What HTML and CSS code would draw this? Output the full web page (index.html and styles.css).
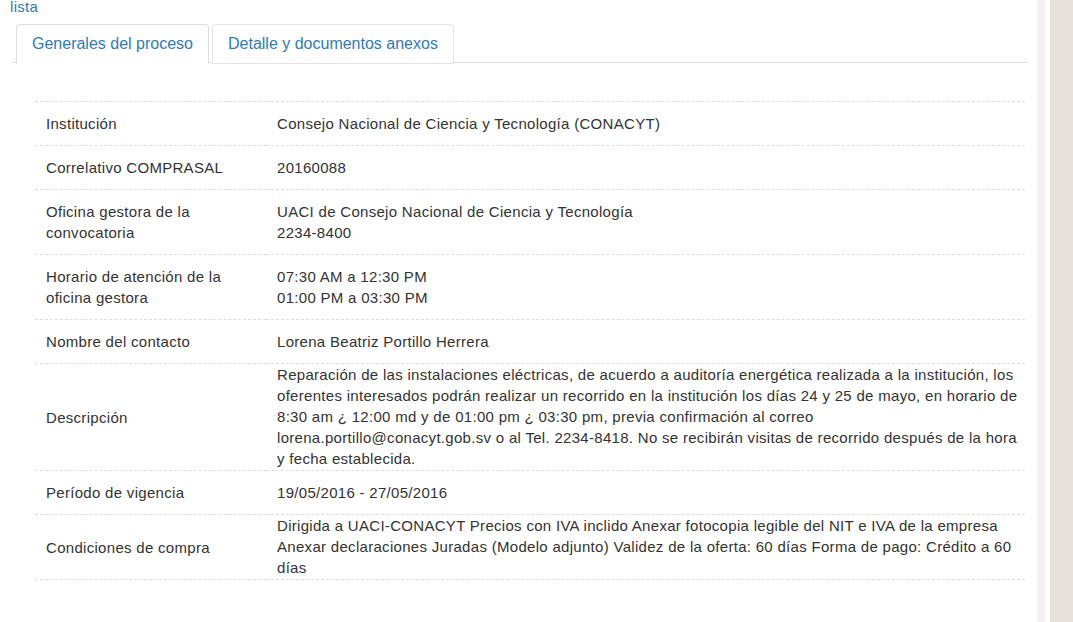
FILE: index.html
```
<!DOCTYPE html>
<html lang="es">
<head>
<meta charset="utf-8">
<title>Proceso</title>
<link rel="stylesheet" href="styles.css">
</head>
<body>
<div class="layout">
  <main class="main">
    <a class="back-link" href="#">lista</a>
    <ul class="tabs">
      <li class="tab active"><a href="#">Generales del proceso</a></li>
      <li class="tab"><a href="#">Detalle y documentos anexos</a></li>
    </ul>
    <table class="details">
      <tbody>
        <tr><td class="label">Institución</td><td class="value">Consejo Nacional de Ciencia y Tecnología (CONACYT)</td></tr>
        <tr><td class="label">Correlativo COMPRASAL</td><td class="value">20160088</td></tr>
        <tr><td class="label">Oficina gestora de la convocatoria</td><td class="value">UACI de Consejo Nacional de Ciencia y Tecnología<br>2234-8400</td></tr>
        <tr><td class="label">Horario de atención de la oficina gestora</td><td class="value">07:30 AM a 12:30 PM<br>01:00 PM a 03:30 PM</td></tr>
        <tr><td class="label">Nombre del contacto</td><td class="value">Lorena Beatriz Portillo Herrera</td></tr>
        <tr><td class="label">Descripción</td><td class="value">Reparación de las instalaciones eléctricas, de acuerdo a auditoría energética realizada a la institución, los oferentes interesados podrán realizar un recorrido en la institución los días 24 y 25 de mayo, en horario de 8:30 am ¿ 12:00 md y de 01:00 pm ¿ 03:30 pm, previa confirmación al correo lorena.portillo@conacyt.gob.sv o al Tel. 2234-8418. No se recibirán visitas de recorrido después de la hora y fecha establecida.</td></tr>
        <tr><td class="label">Período de vigencia</td><td class="value">19/05/2016 - 27/05/2016</td></tr>
        <tr><td class="label">Condiciones de compra</td><td class="value">Dirigida a UACI-CONACYT Precios con IVA inclido Anexar fotocopia legible del NIT e IVA de la empresa Anexar declaraciones Juradas (Modelo adjunto) Validez de la oferta: 60 días Forma de pago: Crédito a 60 días</td></tr>
      </tbody>
    </table>
  </main>
  <div class="gutter"></div>
  <div class="spacer"></div>
  <aside class="side"></aside>
</div>
</body>
</html>
```
FILE: styles.css
```
html, body {
  margin: 0;
  padding: 0;
  height: 100%;
}
body {
  font-family: "Liberation Sans", Arial, sans-serif;
  font-size: 15px;
  line-height: 21px;
  color: #333;
  background: #fff;
  overflow: hidden;
}
.layout {
  display: flex;
  height: 622px;
}
.main {
  width: 1037px;
  flex: none;
  background: #fff;
}
.gutter {
  width: 8px;
  flex: none;
  background: #f2f2f2;
}
.spacer {
  width: 5px;
  flex: none;
  background: #fff;
}
.side {
  flex: 1;
  background: #e6e2d9;
}
a {
  color: #2f7ab8;
  text-decoration: none;
}
.back-link {
  display: block;
  margin: -4px 0 0 10px;
  height: 20px;
  letter-spacing: 0.3px;
}
.tabs {
  list-style: none;
  margin: 8px 9px 0 12px;
  padding: 0 0 0 4px;
  display: flex;
  border-bottom: 1px solid #ddd;
  height: 38px;
}
.tab {
  margin-right: 3px;
}
.tab a {
  display: block;
  font-size: 16px;
  line-height: 22px;
  padding: 8px 15px;
  border: 1px solid #e3e3e3;
  border-radius: 4px 4px 0 0;
  background: #fff;
}
.tab.active a {
  border-color: #ddd #ddd transparent #ddd;
}
.details {
  border-collapse: collapse;
  margin: 38px 0 0 35px;
  width: 990px;
  letter-spacing: 0.3px;
}
.details tr {
  border-top: 1px dashed #ddd;
  border-bottom: 1px dashed #ddd;
}
.label {
  width: 209px;
  padding: 11px 11px;
  vertical-align: middle;
}
.value {
  padding: 0 4px 1px 11px;
  vertical-align: middle;
}
```
